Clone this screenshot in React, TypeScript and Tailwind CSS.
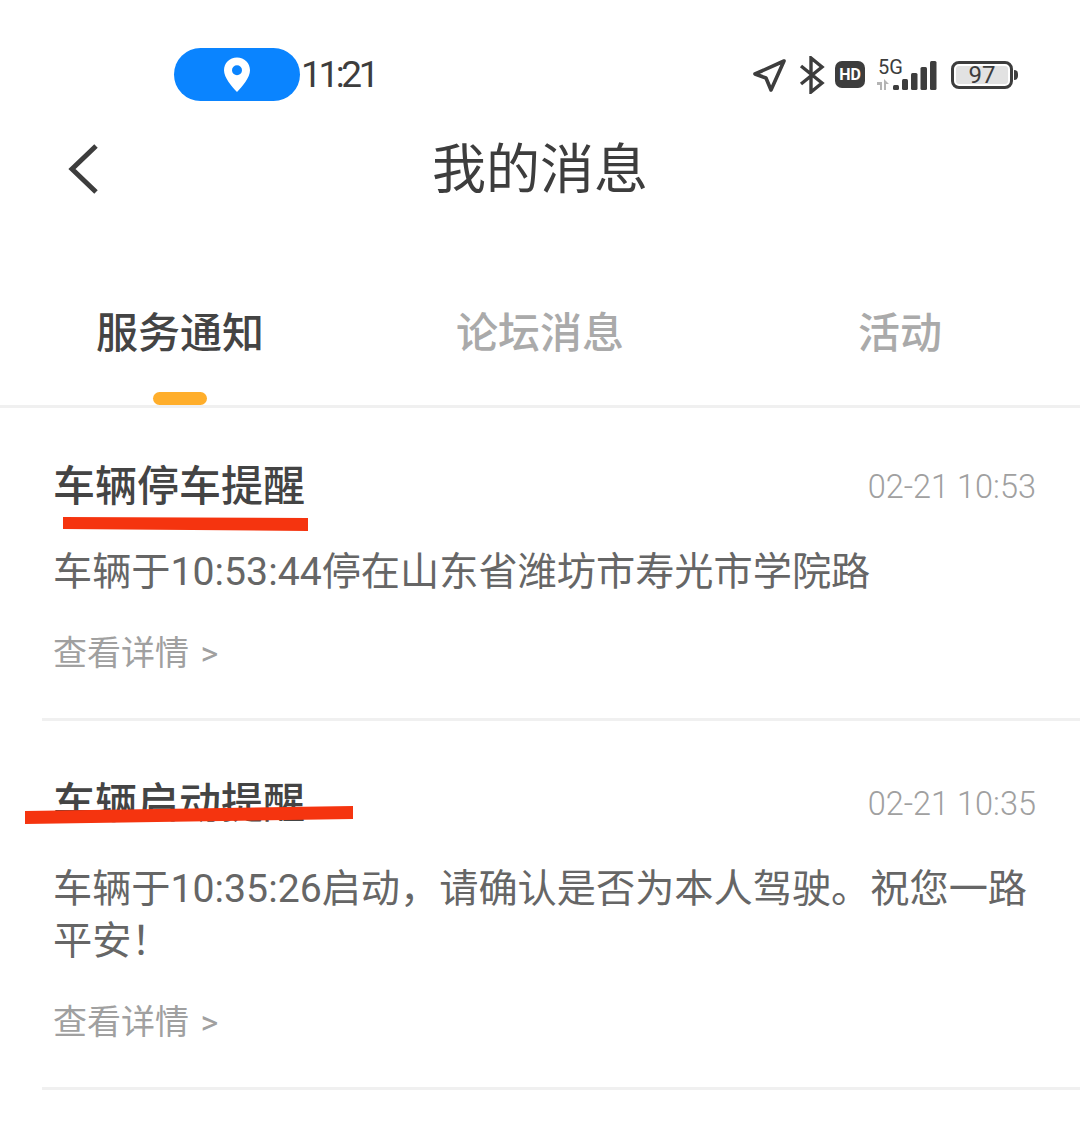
import React from 'react'

const cjk = "font-['Roboto','Noto_Sans_CJK_SC',sans-serif]"

const StatusBar = () => (
  <div className="h-[120px] flex items-center pt-[29px] pl-[174px] pr-[62px]">
    <div className="w-[126px] h-[53px] rounded-full bg-[#0a84ff] flex items-center justify-center">
      <svg width="28" height="36" viewBox="0 0 28 36">
        <path fillRule="evenodd" fill="#fff" d="M14 0.5C6.5 0.5 1 6.2 1 13.2 1 20.5 8.5 29 14 35 19.5 29 27 20.5 27 13.2 27 6.2 21.5 0.5 14 0.5ZM14 8.2a5 5 0 1 1 0 10 5 5 0 0 1 0-10Z" />
      </svg>
    </div>
    <span className="text-[37px] leading-none tracking-[-3.4px] text-[#3d3d3d] ml-[1px] font-['Roboto',sans-serif]">11:21</span>
    <div className="ml-auto flex items-center">
      <svg width="36" height="36" viewBox="0 0 36 36" fill="none" stroke="#3d3d3d" strokeWidth="3.6" strokeLinejoin="round">
        <path d="M33 4 4 17 15 21 20 33Z" />
      </svg>
      <svg className="ml-[12px]" width="26" height="38" viewBox="0 0 26 38" fill="none" stroke="#3d3d3d" strokeWidth="3.4">
        <path d="M2 10 23 27 12 36V2L23 11 2 28" />
      </svg>
      <div className="ml-[10px] w-[30px] h-[27px] rounded-[7px] bg-[#3d3d3d] flex items-center justify-center text-white text-[16px] font-bold leading-none font-['Roboto',sans-serif]">HD</div>
      <div className="ml-[11px] relative w-[62px] h-[32px]">
        <span className="absolute left-[2px] top-[-2px] text-[20px] leading-none text-[#3d3d3d] font-['Roboto',sans-serif]">5G</span>
        <svg className="absolute left-0 top-0" width="62" height="32" viewBox="0 0 62 32">
          <path d="M1 23h5v8H4v-5H1ZM8 20l5 5h-3v6H8Z" fill="#b5b5b5" />
          <rect x="17" y="26" width="6" height="5" rx="1.5" fill="#3d3d3d" />
          <rect x="26" y="20" width="6" height="11" rx="1.5" fill="#3d3d3d" />
          <rect x="35" y="14" width="6.5" height="17" rx="1.5" fill="#3d3d3d" />
          <rect x="44.5" y="8" width="6.5" height="23" rx="1.5" fill="#3d3d3d" />
          <rect x="54" y="2" width="6.5" height="29" rx="1.5" fill="#3d3d3d" />
        </svg>
      </div>
      <div className="ml-[13px] flex items-center">
        <div className="w-[62px] h-[28px] rounded-[8px] border-[3px] border-[#3d3d3d] p-[2px]">
          <div className="w-full h-full rounded-[3px] bg-[#e2e2e2] flex items-center justify-center text-[#3d3d3d] text-[24px] leading-none font-['Roboto',sans-serif]">97</div>
        </div>
        <div className="w-[4px] h-[10px] ml-[1px] rounded-r-sm bg-[#3d3d3d]" />
      </div>
    </div>
  </div>
)

const Header = () => (
  <div className="relative h-[96px] flex items-center justify-center">
    <svg className="absolute left-[66px] top-[23px]" width="34" height="52" viewBox="0 0 34 52" fill="none" stroke="#3d3d3d" strokeWidth="5">
      <path d="M30 3 6 26l24 23" />
    </svg>
    <h1 className={`pt-[6px] text-[54px] leading-none font-normal text-[#3d3d3d] ${cjk}`}>我的消息</h1>
  </div>
)

const Tabs = () => (
  <div className="mt-[69px] relative h-[123px] grid grid-cols-3 border-b-[3px] border-[#f0f0f0]">
    <div className={`pt-[19px] text-center text-[42px] leading-[60px] font-medium text-[#444] ${cjk}`}>服务通知</div>
    <div className={`pt-[19px] text-center text-[42px] leading-[60px] font-medium text-[#aaa] ${cjk}`}>论坛消息</div>
    <div className={`pt-[19px] text-center text-[42px] leading-[60px] font-medium text-[#aaa] ${cjk}`}>活动</div>
    <div className="absolute left-[153px] bottom-0 w-[54px] h-[13px] rounded-full bg-[#ffae2b]" />
  </div>
)

const Message = ({ title, time, body, top }: { title: string, time: string, body: string, top: string }) => (
  <div className="ml-[42px] border-b-[3px] border-[#f0f0f0] pl-[11px] pr-[44px]">
    <div className={`flex justify-between items-center ${top}`}>
      <span className={`text-[42px] leading-[60px] font-medium text-[#444] ${cjk}`}>{title}</span>
      <span className="text-[32.5px] leading-[60px] font-light text-[#a0a0a0] font-['Roboto',sans-serif]">{time}</span>
    </div>
    <p className={`mt-[29px] text-[39.2px] leading-[52px] text-[#666] ${cjk}`}>{body}</p>
    <div className={`mt-[30px] pb-[40px] text-[34px] leading-[50px] [word-spacing:3px] text-[#a0a0a0] ${cjk}`}>查看详情 &gt;</div>
  </div>
)

export default function App() {
  return (
    <div className="relative w-[1080px] h-[1126px] bg-white overflow-hidden">
      <StatusBar />
      <Header />
      <Tabs />
      <Message top="pt-[49px]" title="车辆停车提醒" time="02-21 10:53" body="车辆于10:53:44停在山东省潍坊市寿光市学院路" />
      <Message top="pt-[53px]" title="车辆启动提醒" time="02-21 10:35" body="车辆于10:35:26启动，请确认是否为本人驾驶。祝您一路平安！" />
      {/* red marker strokes drawn on top of the screenshot */}
      <svg className="absolute left-0 top-0 pointer-events-none" width="1080" height="1126" viewBox="0 0 1080 1126">
        <path d="M63 517 308 518V531L63 529Z" fill="#f5340f" />
        <path d="M25 811 353 806V819L25 824Z" fill="#f5340f" />
      </svg>
    </div>
  )
}
